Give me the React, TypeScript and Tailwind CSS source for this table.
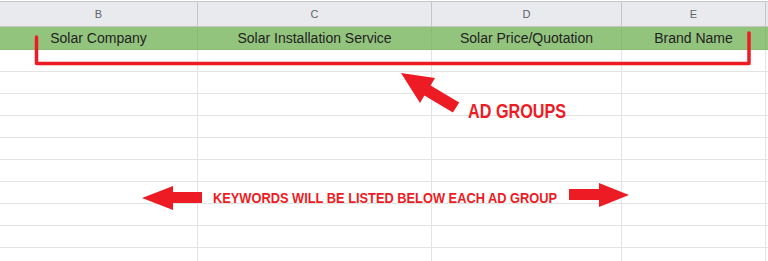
const columns = [
  { letter: 'B', title: 'Solar Company', width: 'w-[198px]' },
  { letter: 'C', title: 'Solar Installation Service', width: 'w-[234px]' },
  { letter: 'D', title: 'Solar Price/Quotation', width: 'w-[190px]' },
  { letter: 'E', title: 'Brand Name', width: 'w-[144px]' },
]

const bodyRows = Array.from({ length: 10 }, (_, i) => i)

function Annotations() {
  return (
    <svg
      className="absolute inset-0 pointer-events-none"
      width="768"
      height="261"
      viewBox="0 0 768 261"
    >
      {/* bracket around the ad group headers */}
      <path
        d="M36.5 37 L36.5 63.5 L749 63.5 L749 33"
        fill="none"
        stroke="#ed1c24"
        strokeWidth="3.5"
        strokeLinecap="round"
        strokeLinejoin="round"
      />
      <polygon
        fill="#ed1c24"
        points="401,73 435,78 430.6,85.4 459.2,102.4 452.9,112.6 424.4,95.6 420,103"
      />
      <polygon
        fill="#ed1c24"
        points="142,198 173,186 173,192 202,192 202,203 173,203 173,210"
      />
      <polygon
        fill="#ed1c24"
        points="629,195 599,183 599,189 569,189 569,200 599,200 599,207"
      />
    </svg>
  )
}

export default function App() {
  return (
    <div className="relative w-[768px] h-[261px] overflow-hidden bg-white pt-px font-['Liberation_Sans',Arial,sans-serif]">
      <div className="flex border-t border-[#c4c7c5] bg-[#e9eaee]">
        {columns.map((col) => (
          <div
            key={col.letter}
            className={`${col.width} h-[25px] shrink-0 border-r border-b border-[#c4c7c5] flex items-center justify-center text-[11px] text-[#5f6368]`}
          >
            {col.letter}
          </div>
        ))}
        <div className="flex-1 h-[25px] border-b border-[#c4c7c5]" />
      </div>

      <div className="flex bg-[#93c47d]">
        {columns.map((col) => (
          <div
            key={col.letter}
            className={`${col.width} h-[23px] shrink-0 border-r border-b border-[#8bbb75] flex items-center justify-center text-[14px] text-[#222222]`}
          >
            {col.title}
          </div>
        ))}
        <div className="flex-1 h-[23px] border-b border-[#8bbb75]" />
      </div>

      {bodyRows.map((row) => (
        <div key={row} className="flex">
          {columns.map((col) => (
            <div
              key={col.letter}
              className={`${col.width} h-[22px] shrink-0 border-r border-b border-[#e2e3e3]`}
            />
          ))}
          <div className="flex-1 h-[22px] border-b border-[#e2e3e3]" />
        </div>
      ))}

      <Annotations />

      <span className="absolute left-[468px] top-[101px] origin-left scale-x-[0.81] whitespace-nowrap text-[20px] leading-[20px] font-bold text-[#ed1c24]">
        AD GROUPS
      </span>
      <span className="absolute left-[213px] top-[190px] origin-left scale-x-[0.855] whitespace-nowrap text-[15px] leading-[15px] font-bold text-[#ed1c24]">
        KEYWORDS WILL BE LISTED BELOW EACH AD GROUP
      </span>
    </div>
  )
}
